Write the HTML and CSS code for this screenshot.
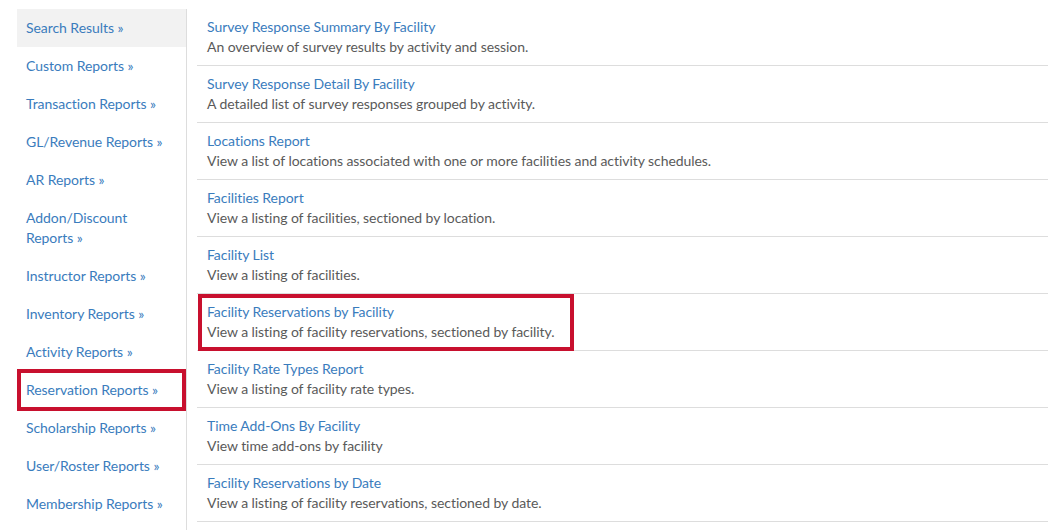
FILE: index.html
```html
<!DOCTYPE html>
<html>
<head>
<meta charset="utf-8">
<link rel="stylesheet" href="styles.css">
</head>
<body>
<div class="page">
  <nav class="sidebar">
    <a class="nav-item active" href="#">Search Results »</a>
    <a class="nav-item" href="#">Custom Reports »</a>
    <a class="nav-item" href="#">Transaction Reports »</a>
    <a class="nav-item" href="#">GL/Revenue Reports »</a>
    <a class="nav-item" href="#">AR Reports »</a>
    <a class="nav-item" href="#">Addon/Discount<br>Reports »</a>
    <a class="nav-item" href="#">Instructor Reports »</a>
    <a class="nav-item" href="#">Inventory Reports »</a>
    <a class="nav-item" href="#">Activity Reports »</a>
    <a class="nav-item highlighted" href="#">Reservation Reports »<span class="mark mark-nav"></span></a>
    <a class="nav-item" href="#">Scholarship Reports »</a>
    <a class="nav-item" href="#">User/Roster Reports »</a>
    <a class="nav-item" href="#">Membership Reports »</a>
  </nav>
  <main class="reports">
    <div class="report">
      <a class="title" href="#">Survey Response Summary By Facility</a>
      <div class="desc">An overview of survey results by activity and session.</div>
    </div>
    <div class="report">
      <a class="title" href="#">Survey Response Detail By Facility</a>
      <div class="desc">A detailed list of survey responses grouped by activity.</div>
    </div>
    <div class="report">
      <a class="title" href="#">Locations Report</a>
      <div class="desc">View a list of locations associated with one or more facilities and activity schedules.</div>
    </div>
    <div class="report">
      <a class="title" href="#">Facilities Report</a>
      <div class="desc">View a listing of facilities, sectioned by location.</div>
    </div>
    <div class="report">
      <a class="title" href="#">Facility List</a>
      <div class="desc">View a listing of facilities.</div>
    </div>
    <div class="report highlighted">
      <a class="title" href="#">Facility Reservations by Facility</a>
      <div class="desc">View a listing of facility reservations, sectioned by facility.</div>
      <span class="mark mark-report"></span>
    </div>
    <div class="report">
      <a class="title" href="#">Facility Rate Types Report</a>
      <div class="desc">View a listing of facility rate types.</div>
    </div>
    <div class="report">
      <a class="title" href="#">Time Add-Ons By Facility</a>
      <div class="desc">View time add-ons by facility</div>
    </div>
    <div class="report">
      <a class="title" href="#">Facility Reservations by Date</a>
      <div class="desc">View a listing of facility reservations, sectioned by date.</div>
    </div>
  </main>
</div>
</body>
</html>
```

FILE: styles.css
```css
html, body {
  margin: 0;
  padding: 0;
  background: #fff;
}
body {
  font-family: Lato, "Open Sans", Arial, sans-serif;
  font-size: 14px;
  line-height: 20px;
  letter-spacing: -0.06px;
  color: #5a5a5a;
  overflow: hidden;
}
.page {
  display: flex;
  padding: 9px 0 0 17px;
  min-height: 530px;
  box-sizing: border-box;
}
.sidebar {
  width: 169px;
  flex: none;
  border-right: 1px solid #ddd;
  display: flex;
  flex-direction: column;
}
.nav-item {
  position: relative;
  display: block;
  padding: 9px 9px;
  color: #3a7cbd;
  text-decoration: none;
}
.nav-item.active {
  background: #f2f2f2;
}
.reports {
  flex: 1;
  margin-left: 10px;
  display: flex;
  flex-direction: column;
}
.report {
  position: relative;
  padding: 8px 10px;
  border-bottom: 1px solid #ddd;
}
.title {
  display: block;
  color: #3a7cbd;
  text-decoration: none;
}
.desc {
  color: #5a5a5a;
}
.mark {
  position: absolute;
  border: 4px solid #c8102e;
  box-sizing: border-box;
  pointer-events: none;
}
.mark-nav {
  left: 0;
  right: 0;
  top: -2px;
  bottom: -2px;
}
.mark-report {
  left: 1px;
  top: 0;
  width: 376px;
  height: 57px;
}
```
